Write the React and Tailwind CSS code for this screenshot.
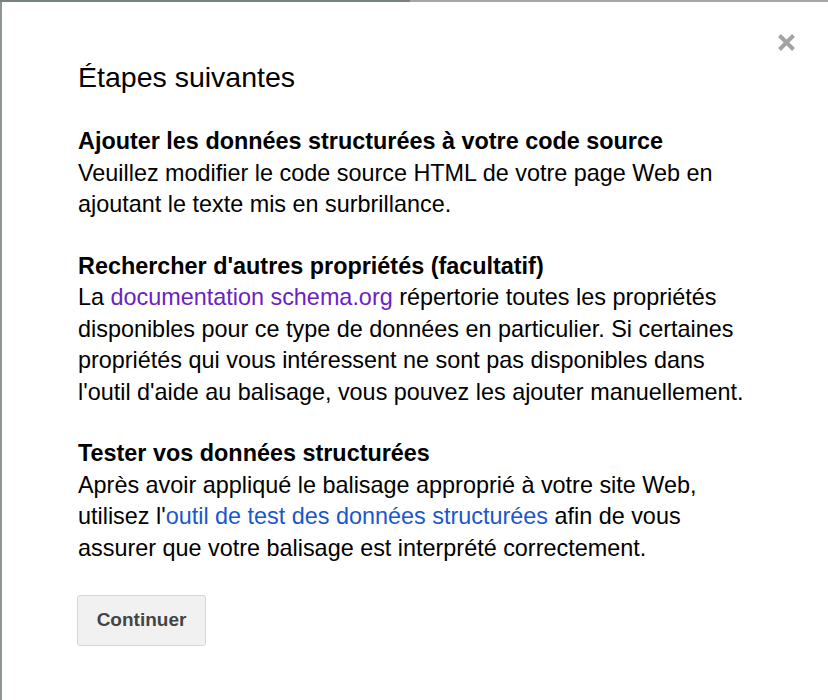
import React from "react";

function CloseIcon() {
  return (
    <svg width="19" height="19" viewBox="0 0 19 19" aria-hidden="true">
      <path d="M2.5 2.5 L16.5 16.5 M16.5 2.5 L2.5 16.5" stroke="#a3a3a3" strokeWidth="4" strokeLinecap="butt" />
    </svg>
  );
}

function Step({ title, children }) {
  return (
    <div className="leading-[31.5px]">
      <h3 className="font-bold">{title}</h3>
      <p>{children}</p>
    </div>
  );
}

export default function App() {
  return (
    <div className="relative w-[828px] h-[700px] bg-white overflow-hidden font-['Liberation_Sans',Arial,sans-serif] text-black">
      <div className="flex h-[2px]">
        <div className="w-[410px] bg-[#78837f]" />
        <div className="flex-1 bg-[#a6a6a6]" />
      </div>
      <div className="flex h-[698px] flex-col items-start border-l-2 border-[#8e9595] pl-[76px]">
        <button className="absolute right-[32px] top-[33px] p-0" aria-label="Fermer">
          <CloseIcon />
        </button>

        <h2 className="mt-[58px] text-[28.5px] leading-[34px]">Étapes suivantes</h2>

        <div className="mt-[32px] flex w-[672px] flex-col gap-[30px] text-[23.4px]">
          <Step title="Ajouter les données structurées à votre code source">
            Veuillez modifier le code source HTML de votre page Web en ajoutant le texte mis en surbrillance.
          </Step>
          <Step title="Rechercher d'autres propriétés (facultatif)">
            La <a href="#" className="text-[#6b22c4]">documentation schema.org</a> répertorie toutes les propriétés
            disponibles pour ce type de données en particulier. Si certaines propriétés qui vous intéressent ne sont
            pas disponibles dans l'outil d'aide au balisage, vous pouvez les ajouter manuellement.
          </Step>
          <Step title="Tester vos données structurées">
            Après avoir appliqué le balisage approprié à votre site Web, utilisez l'
            <a href="#" className="text-[#1b56cc]">outil de test des données structurées</a> afin de vous assurer
            que votre balisage est interprété correctement.
          </Step>
        </div>

        <button className="mt-[31px] ml-[-1px] w-[129px] h-[51px] rounded-[3px] border border-[#d6d6d6] bg-[#f1f1f1] text-[19px] font-bold text-[#444]">
          Continuer
        </button>
      </div>
    </div>
  );
}
